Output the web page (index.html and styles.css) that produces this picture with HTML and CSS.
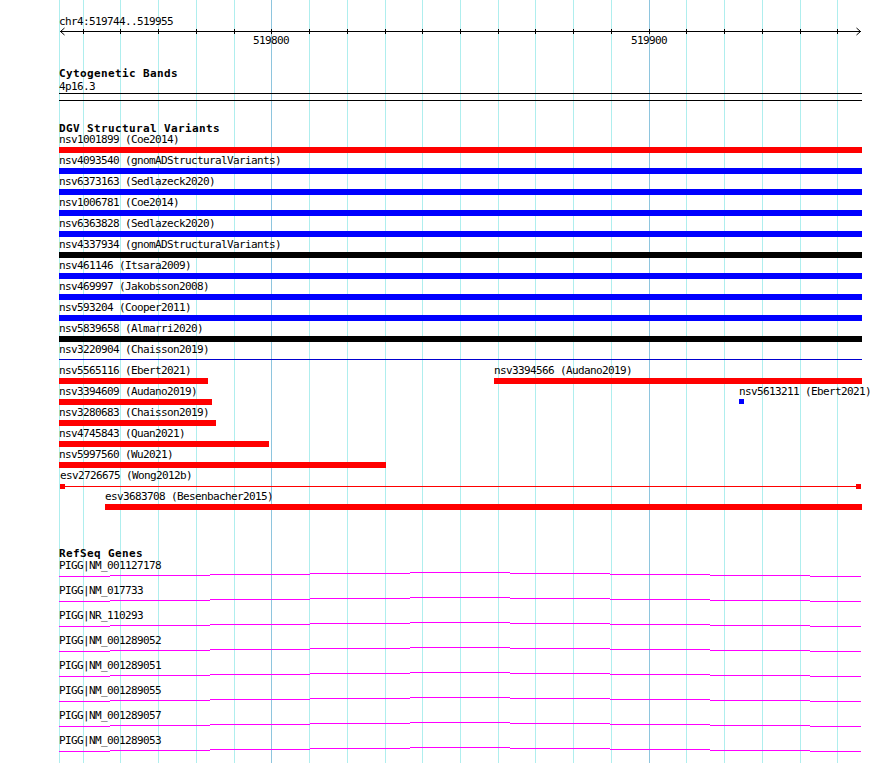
FILE: index.html
```html
<!DOCTYPE html>
<html>
  <head>
    <meta charset="UTF-8" />
    <title>chr4:519744..519955</title>
    <link rel="stylesheet" href="styles.css">
  </head>

  <body>
    <div class="browser">
      <svg class="grid" width="890" height="763">
        <path class="minor" d="M59.5 0V763M83.5 0V763M120.5 0V763M158.5 0V763M196.5 0V763M234.5 0V763M309.5 0V763M347.5 0V763M385.5 0V763M422.5 0V763M460.5 0V763M498.5 0V763M535.5 0V763M573.5 0V763M611.5 0V763M686.5 0V763M724.5 0V763M762.5 0V763M800.5 0V763M837.5 0V763" />
        <path class="major" d="M271.5 0V763M649.5 0V763" />
      </svg>

      <div class="panel">
        <!-- ruler -->
        <div class="ruler">
          <div class="label">chr4:519744..519955</div>
          <svg class="scale" width="803" height="7">
            <path d="M1 4.5H802M24.5 2V7M61.5 2V7M99.5 2V7M137.5 2V7M175.5 2V7M212.5 2V7M250.5 2V7M288.5 2V7M326.5 2V7M363.5 2V7M401.5 2V7M439.5 2V7M476.5 2V7M514.5 2V7M552.5 2V7M590.5 2V7M627.5 2V7M665.5 2V7M703.5 2V7M741.5 2V7M778.5 2V7" />
            <path d="M5.5 1L1.5 4.5L5.5 8M797.5 1L801.5 4.5L797.5 8" />
          </svg>
          <div class="ticks">
            <span style="left:194px">519800</span>
            <span style="left:572px">519900</span>
          </div>
        </div>

        <!-- cytogenetic bands -->
        <div class="track">
          <div class="track-title">Cytogenetic Bands</div>
          <div class="label cyto-name">4p16.3</div>
          <div class="band"></div>
        </div>

        <!-- DGV -->
        <div class="track">
          <div class="track-title">DGV Structural Variants</div>
          <div class="row"><div class="feat" style="width:803px"><div class="label">nsv1001899 (Coe2014)</div><div class="bar red"></div></div></div>
          <div class="row"><div class="feat" style="width:803px"><div class="label">nsv4093540 (gnomADStructuralVariants)</div><div class="bar blue"></div></div></div>
          <div class="row"><div class="feat" style="width:803px"><div class="label">nsv6373163 (Sedlazeck2020)</div><div class="bar blue"></div></div></div>
          <div class="row"><div class="feat" style="width:803px"><div class="label">nsv1006781 (Coe2014)</div><div class="bar blue"></div></div></div>
          <div class="row"><div class="feat" style="width:803px"><div class="label">nsv6363828 (Sedlazeck2020)</div><div class="bar blue"></div></div></div>
          <div class="row"><div class="feat" style="width:803px"><div class="label">nsv4337934 (gnomADStructuralVariants)</div><div class="bar black"></div></div></div>
          <div class="row"><div class="feat" style="width:803px"><div class="label">nsv461146 (Itsara2009)</div><div class="bar blue"></div></div></div>
          <div class="row"><div class="feat" style="width:803px"><div class="label">nsv469997 (Jakobsson2008)</div><div class="bar blue"></div></div></div>
          <div class="row"><div class="feat" style="width:803px"><div class="label">nsv593204 (Cooper2011)</div><div class="bar blue"></div></div></div>
          <div class="row"><div class="feat" style="width:803px"><div class="label">nsv5839658 (Almarri2020)</div><div class="bar black"></div></div></div>
          <div class="row"><div class="feat" style="width:803px"><div class="label">nsv3220904 (Chaisson2019)</div><div class="thin"></div></div></div>

          <div class="row">
            <div class="feat" style="width:149px"><div class="label">nsv5565116 (Ebert2021)</div><div class="bar red"></div></div>
            <div class="feat" style="margin-left:286px;width:368px"><div class="label">nsv3394566 (Audano2019)</div><div class="bar red"></div></div>
          </div>
          <div class="row">
            <div class="feat" style="width:153px"><div class="label">nsv3394609 (Audano2019)</div><div class="bar red"></div></div>
            <div class="feat" style="margin-left:527px;width:5px"><div class="label">nsv5613211 (Ebert2021)</div><div class="dot blue"></div></div>
          </div>
          <div class="row"><div class="feat" style="width:157px"><div class="label">nsv3280683 (Chaisson2019)</div><div class="bar red"></div></div></div>
          <div class="row"><div class="feat" style="width:210px"><div class="label">nsv4745843 (Quan2021)</div><div class="bar red"></div></div></div>
          <div class="row"><div class="feat" style="width:327px"><div class="label">nsv5997560 (Wu2021)</div><div class="bar red"></div></div></div>
          <div class="row">
            <div class="feat" style="margin-left:1px;width:801px">
              <div class="label">esv2726675 (Wong2012b)</div>
              <div class="split">
                <div class="cap"></div>
                <div class="link"></div>
                <div class="cap"></div>
              </div>
            </div>
          </div>
          <div class="row"><div class="feat" style="margin-left:46px;width:757px"><div class="label">esv3683708 (Besenbacher2015)</div><div class="bar red"></div></div></div>
        </div>

        <!-- RefSeq -->
        <div class="track refseq">
          <div class="track-title">RefSeq Genes</div>
          <div class="genes">
            <div class="gene"><div class="label">PIGG|NM_001127178</div><svg class="hat" width="803" height="14"><path d="M0 5.5H51M51 4.5H151M151 3.5H251M251 2.5H351M351 1.5H451M451 2.5H551M551 3.5H651M651 4.5H751M751 5.5H802" /></svg></div>
            <div class="gene"><div class="label">PIGG|NM_017733</div><svg class="hat" width="803" height="14"><path d="M0 5.5H51M51 4.5H151M151 3.5H251M251 2.5H351M351 1.5H451M451 2.5H551M551 3.5H651M651 4.5H751M751 5.5H802" /></svg></div>
            <div class="gene"><div class="label">PIGG|NR_110293</div><svg class="hat" width="803" height="14"><path d="M0 5.5H51M51 4.5H151M151 3.5H251M251 2.5H351M351 1.5H451M451 2.5H551M551 3.5H651M651 4.5H751M751 5.5H802" /></svg></div>
            <div class="gene"><div class="label">PIGG|NM_001289052</div><svg class="hat" width="803" height="14"><path d="M0 5.5H51M51 4.5H151M151 3.5H251M251 2.5H351M351 1.5H451M451 2.5H551M551 3.5H651M651 4.5H751M751 5.5H802" /></svg></div>
            <div class="gene"><div class="label">PIGG|NM_001289051</div><svg class="hat" width="803" height="14"><path d="M0 5.5H51M51 4.5H151M151 3.5H251M251 2.5H351M351 1.5H451M451 2.5H551M551 3.5H651M651 4.5H751M751 5.5H802" /></svg></div>
            <div class="gene"><div class="label">PIGG|NM_001289055</div><svg class="hat" width="803" height="14"><path d="M0 5.5H51M51 4.5H151M151 3.5H251M251 2.5H351M351 1.5H451M451 2.5H551M551 3.5H651M651 4.5H751M751 5.5H802" /></svg></div>
            <div class="gene"><div class="label">PIGG|NM_001289057</div><svg class="hat" width="803" height="14"><path d="M0 5.5H51M51 4.5H151M151 3.5H251M251 2.5H351M351 1.5H451M451 2.5H551M551 3.5H651M651 4.5H751M751 5.5H802" /></svg></div>
            <div class="gene"><div class="label">PIGG|NM_001289053</div><svg class="hat" width="803" height="14"><path d="M0 5.5H51M51 4.5H151M151 3.5H251M251 2.5H351M351 1.5H451M451 2.5H551M551 3.5H651M651 4.5H751M751 5.5H802" /></svg></div>
          </div>
        </div>
      </div>
    </div>
  </body>
</html>
```

FILE: styles.css
```css
body {
  margin: 0;
  background: #fff;
  color: #000;
  font-family: "DejaVu Sans Mono", "Liberation Mono", monospace;
  font-size: 11px;
  line-height: 11px;
  letter-spacing: -0.62px;
}

.browser {
  position: relative;
  width: 890px;
  height: 763px;
  overflow: hidden;
}

/* background grid, drawn under the tracks */
.grid {
  position: absolute;
  top: 0;
  left: 0;
}

.grid path {
  fill: none;
  stroke-width: 1;
  shape-rendering: crispEdges;
}

.grid .minor {
  stroke: #afeeee;
}

.grid .major {
  stroke: #8ec5de;
}

.panel {
  position: relative;
  margin-left: 59px;
  width: 803px;
}

.label {
  height: 11px;
  white-space: nowrap;
}

/* ruler */
.ruler {
  padding-top: 16px;
}

.scale {
  display: block;
  overflow: visible;
}

.scale path {
  fill: none;
  stroke: #000;
  stroke-width: 1;
}

.ticks {
  position: relative;
  height: 11px;
  margin-top: 1px;
}

.ticks span {
  position: absolute;
  top: 0;
}

/* tracks */
.track-title {
  margin-top: 22px;
  height: 11px;
  font-weight: bold;
  letter-spacing: 0.38px;
  white-space: nowrap;
}

.cyto-name {
  margin-top: 2px;
}

.band {
  margin-top: 1px;
  height: 6px;
  border-top: 1px solid #000;
  border-bottom: 1px solid #000;
}

.row {
  display: flex;
  height: 21px;
}

.feat {
  flex: none;
}

.bar {
  height: 6px;
  margin-top: 2px;
}

.dot {
  width: 5px;
  height: 5px;
  margin-top: 2px;
}

.thin {
  height: 1px;
  margin-top: 4px;
  background: #0000d0;
}

.split {
  display: flex;
  align-items: center;
  height: 6px;
  margin-top: 2px;
}

.split .cap {
  width: 5px;
  height: 5px;
  background: #f00;
}

.split .link {
  flex: 1;
  height: 1px;
  background: #f00;
}

.red {
  background: #f00;
}

.blue {
  background: #00f;
}

.black {
  background: #000;
}

/* refseq genes */
.refseq .track-title {
  margin-top: 36px;
}

.genes {
  margin-top: 1px;
}

.hat {
  display: block;
}

.hat path {
  fill: none;
  stroke: #f0f;
  stroke-width: 1;
  shape-rendering: crispEdges;
}
```
